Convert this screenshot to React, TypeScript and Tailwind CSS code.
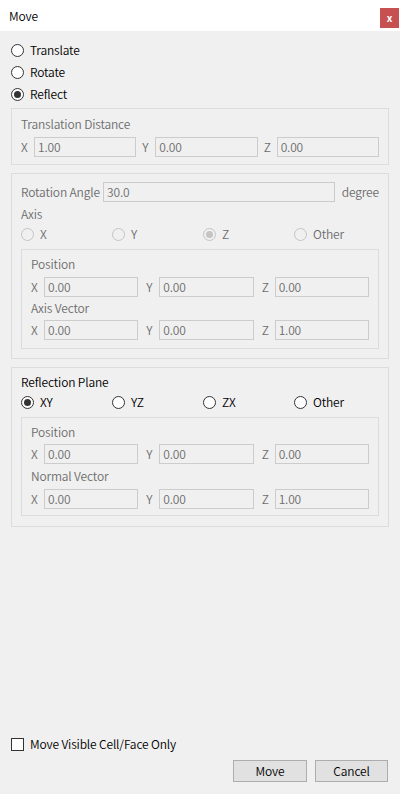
import React from 'react';

const font = { fontFamily: '"Noto Sans CJK JP", "Noto Sans", sans-serif' };

function Radio({ label, checked, disabled }: { label: string; checked?: boolean; disabled?: boolean }) {
  return (
    <div className="flex items-center h-[16px]">
      <span
        className={`w-[13px] h-[13px] rounded-full border flex items-center justify-center ${
          disabled ? 'border-[#c4c4c4] bg-[#f0f0f0]' : 'border-[#333333] bg-white'
        }`}
      >
        {checked && <span className={`w-[7px] h-[7px] rounded-full ${disabled ? 'bg-[#c4c4c4]' : 'bg-[#333333]'}`} />}
      </span>
      <span className={`ml-[6px] ${disabled ? 'text-[#6d6d6d]' : 'text-black'}`}>{label}</span>
    </div>
  );
}

function Field({ value }: { value: string }) {
  return (
    <div className="flex-1 h-[20px] border border-[#cccccc] bg-[#f0f0f0] pl-[3px] flex items-center text-[#6d6d6d]">
      {value}
    </div>
  );
}

function XYZ({ values, gap }: { values: string[]; gap: string }) {
  const labels = ['X', 'Y', 'Z'];
  return (
    <div className={`flex ${gap}`}>
      {labels.map((l, i) => (
        <div key={l} className="flex-1 flex items-center">
          <span className="w-[13px] text-[#6d6d6d]">{l}</span>
          <Field value={values[i]} />
        </div>
      ))}
    </div>
  );
}

export default function App() {
  return (
    <div
      className="w-[400px] h-[794px] bg-[#f0f0f0] flex flex-col text-[12px] leading-[16px] tracking-[-0.15px] font-[350] select-none"
      style={font}
    >
      {/* title bar */}
      <div className="h-[31px] bg-white flex items-start">
        <span className="pl-[9px] mt-[8px] text-black">Move</span>
        <div className="ml-auto mr-[1px] mt-[8px] w-[19px] h-[20px] bg-[#c75050] flex items-center justify-center text-white text-[10px] font-bold leading-none">
          x
        </div>
      </div>

      <div className="flex-1 px-[11px] pt-[8px]">
        <div className="h-[22px] flex items-center"><Radio label="Translate" /></div>
        <div className="h-[22px] flex items-center"><Radio label="Rotate" /></div>
        <div className="h-[22px] flex items-center"><Radio label="Reflect" checked /></div>

        {/* translation */}
        <div className="mt-[3px] border border-[#dcdcdc] px-[9px] pt-[7px] pb-[7px]">
          <div className="text-[#6d6d6d]">Translation Distance</div>
          <div className="mt-[5px]">
            <XYZ values={['1.00', '0.00', '0.00']} gap="gap-[6px]" />
          </div>
        </div>

        {/* rotation */}
        <div className="mt-[8px] border border-[#dcdcdc] px-[9px] pt-[8px] pb-[9px]">
          <div className="flex items-center">
            <span className="text-[#6d6d6d] w-[82px]">Rotation Angle</span>
            <Field value="30.0" />
            <span className="ml-[7px] text-[#6d6d6d]">degree</span>
          </div>
          <div className="mt-[4px] text-[#6d6d6d]">Axis</div>
          <div className="mt-[4px] grid grid-cols-[91px_91px_91px_1fr]">
            <Radio label="X" disabled />
            <Radio label="Y" disabled />
            <Radio label="Z" checked disabled />
            <Radio label="Other" disabled />
          </div>
          <div className="mt-[7px] border border-[#dcdcdc] px-[9px] pt-[6px] pb-[8px]">
            <div className="text-[#6d6d6d]">Position</div>
            <div className="mt-[5px]">
              <XYZ values={['0.00', '0.00', '0.00']} gap="gap-[8px]" />
            </div>
            <div className="mt-[3px] text-[#6d6d6d]">Axis Vector</div>
            <div className="mt-[4px]">
              <XYZ values={['0.00', '0.00', '1.00']} gap="gap-[8px]" />
            </div>
          </div>
        </div>

        {/* reflection */}
        <div className="mt-[8px] border border-[#dcdcdc] px-[9px] pt-[6px] pb-[10px]">
          <div className="text-black">Reflection Plane</div>
          <div className="mt-[4px] grid grid-cols-[91px_91px_91px_1fr]">
            <Radio label="XY" checked />
            <Radio label="YZ" />
            <Radio label="ZX" />
            <Radio label="Other" />
          </div>
          <div className="mt-[7px] border border-[#dcdcdc] px-[9px] pt-[6px] pb-[6px]">
            <div className="text-[#6d6d6d]">Position</div>
            <div className="mt-[4px]">
              <XYZ values={['0.00', '0.00', '0.00']} gap="gap-[8px]" />
            </div>
            <div className="mt-[4px] text-[#6d6d6d]">Normal Vector</div>
            <div className="mt-[5px]">
              <XYZ values={['0.00', '0.00', '1.00']} gap="gap-[8px]" />
            </div>
          </div>
        </div>
      </div>

      {/* footer */}
      <div className="px-[11px] pb-[12px]">
        <div className="flex items-center h-[16px]">
          <span className="w-[13px] h-[13px] border border-[#333333] bg-white" />
          <span className="ml-[6px] text-black">Move Visible Cell/Face Only</span>
        </div>
        <div className="mt-[8px] flex justify-end gap-[8px] pr-[1px]">
          <button className="w-[74px] h-[22px] border border-[#adadad] bg-[#e1e1e1] text-black">Move</button>
          <button className="w-[73px] h-[22px] border border-[#adadad] bg-[#e1e1e1] text-black">Cancel</button>
        </div>
      </div>
    </div>
  );
}
